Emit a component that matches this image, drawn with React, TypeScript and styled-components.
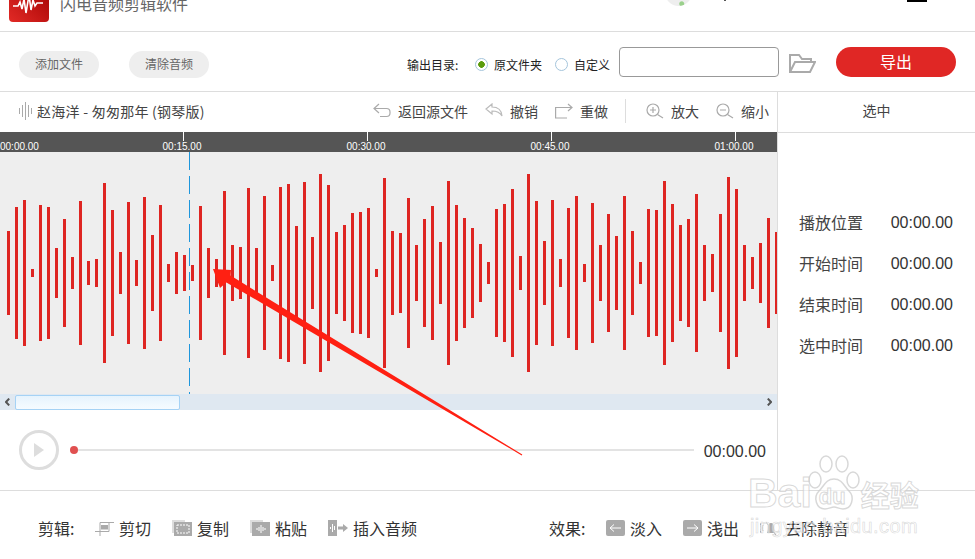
import React from 'react';
import styled, { createGlobalStyle } from 'styled-components';

const WAVE = [
  42, 66, 73, 4, 68, 66, 25, 54, 16, 72, 12, 14, 90, 63, 21, 71, 13, 76, 38, 68, 9, 21, 18, 8, 67,
  25, 14, 82, 28, 26, 85, 25, 77, 8, 86, 89, 47, 91, 36, 99, 88, 41, 48, 60, 61, 65, 4, 95, 42, 40,
  75, 28, 54, 67, 31, 92, 68, 55, 45, 29, 11, 64, 69, 84, 17, 99, 72, 32, 73, 14, 65, 77, 9, 70, 28,
  59, 37, 77, 42, 11, 64, 63, 92, 69, 48, 54, 79, 28, 19, 59, 96, 84, 28, 16, 30, 55, 41,
];

const MARKS = ['00:15.00', '00:30.00', '00:45.00', '01:00.00'];
const INFO = ['播放位置', '开始时间', '结束时间', '选中时间'];

const GlobalStyle = createGlobalStyle`
  html, body {
    margin: 0;
    padding: 0;
    background: #fff;
    overflow: hidden;
  }
  * {
    box-sizing: border-box;
  }
`;

const Page = styled.div`
  position: relative;
  width: 975px;
  height: 559px;
  overflow: hidden;
  background: #fff;
  color: #444;
  font-family: 'Noto Sans CJK SC', 'Liberation Sans', sans-serif;
`;

const Header = styled.header`
  display: flex;
  align-items: flex-start;
  height: 32px;
  padding-left: 9px;
  overflow: hidden;
  border-bottom: 1px solid #ddd;
`;

const Logo = styled.div`
  flex: none;
  width: 40px;
  height: 40px;
  margin-top: -18px;
  border-radius: 4px;
  background: linear-gradient(45deg, #e22a26, #a00000);
`;

const AppName = styled.div`
  margin: -7px 0 0 11px;
  width: 128px;
  font-size: 16px;
  line-height: 20px;
  white-space: nowrap;
  color: #666;
`;

const AvatarEdge = styled.div`
  flex: none;
  width: 27px;
  height: 27px;
  margin: -21px 0 0 477px;
  border-radius: 50%;
  background: radial-gradient(circle at 62% 92%, #9ad08c 0 2px, #eee 3px);
`;

const ArrowEdge = styled.div`
  flex: none;
  width: 2px;
  height: 1px;
  margin-left: 32px;
  background: #555;
`;

const WindowEdge = styled.div`
  flex: none;
  width: 20px;
  height: 2px;
  margin-left: 181px;
  background: #000;
`;

const Toolbar = styled.section`
  display: flex;
  align-items: center;
  height: 60px;
  padding: 0 19px;
  border-bottom: 1px solid #ddd;
`;

const PillButton = styled.button`
  width: 80px;
  height: 27px;
  margin: 6px 30px 0 0;
  padding: 0 0 2px;
  border: 0;
  border-radius: 14px;
  background: #eee;
  color: #666;
  font: 12px 'Noto Sans CJK SC', sans-serif;
`;

const OutputGroup = styled.div`
  display: flex;
  align-items: center;
  margin-left: auto;
`;

const OutputLabel = styled.span`
  width: 54px;
  margin: 6px 14px 0 0;
  font-size: 12px;
  color: #222;
  white-space: nowrap;
`;

const RadioItem = styled.label`
  display: flex;
  align-items: center;
  gap: 6px;
  margin: 6px 13px 0 0;
  font-size: 12px;
  color: #222;
  white-space: nowrap;
`;

const RadioMark = styled.i<{ $on?: boolean }>`
  display: block;
  width: 13px;
  height: 13px;
  border: 1px solid #a5c5dc;
  border-radius: 50%;
  background: ${(p) => (p.$on ? 'radial-gradient(circle, #5b9c0e 0 3px, #fff 3.6px)' : '#fff')};
`;

const PathInput = styled.div`
  width: 160px;
  height: 30px;
  margin-left: -4px;
  border: 1px solid #999;
  border-radius: 4px;
`;

const FolderIcon = styled.svg`
  margin: 3px 20px 0 10px;
`;

const ExportButton = styled.button`
  width: 120px;
  height: 30px;
  padding: 0 0 2px;
  border: 0;
  border-radius: 15px;
  background: #e02725;
  color: #fff;
  font: 16px 'Noto Sans CJK SC', sans-serif;
`;

const Main = styled.main`
  display: flex;
  height: 399px;
  border-bottom: 1px solid #ddd;
`;

const LeftColumn = styled.div`
  flex: none;
  width: 777px;
  overflow: hidden;
`;

const TitleRow = styled.div`
  display: flex;
  align-items: center;
  height: 40px;
  padding: 0 0 2px 19px;
  font-size: 14px;
`;

const TrackName = styled.span`
  margin-left: 5px;
  width: 168px;
  letter-spacing: 0.25px;
  white-space: nowrap;
`;

const ActionGroup = styled.div`
  display: flex;
  align-items: center;
  margin-left: auto;
  padding-right: 8px;
`;

const Action = styled.span<{ $gap?: number }>`
  display: flex;
  align-items: center;
  gap: 7px;
  margin-left: ${(p) => p.$gap ?? 17}px;
  white-space: nowrap;
`;

const Divider = styled.span`
  width: 1px;
  height: 24px;
  margin-left: 17px;
  background: #ddd;
`;

const Ruler = styled.div`
  display: flex;
  height: 20px;
  overflow: hidden;
  background: #555;
  font-family: 'Liberation Sans', sans-serif;
  font-size: 10px;
  color: #fff;
`;

const StartMark = styled.div`
  flex: none;
  width: 91px;
  padding-top: 9px;
  line-height: 12px;
`;

const Mark = styled.div`
  flex: none;
  position: relative;
  width: 184px;
  padding: 9px 2px 0 0;
  line-height: 12px;
  text-align: center;

  &::before {
    content: '';
    position: absolute;
    top: 0;
    left: 92px;
    width: 1px;
    height: 9px;
    background: #fff;
  }
`;

const Wave = styled.div`
  position: relative;
  height: 242px;
  background: #eee;
`;

const Cursor = styled.div`
  position: absolute;
  top: 0;
  bottom: 0;
  left: 189px;
  width: 1px;
  background: repeating-linear-gradient(to bottom, #1e96dc 0 18px, transparent 18px 24px);
`;

const ScrollTrack = styled.div`
  display: flex;
  align-items: center;
  height: 16px;
  background: #dfe8f1;
`;

const ScrollThumb = styled.div`
  width: 165px;
  height: 15px;
  margin: 0 auto 0 0;
  border: 1px solid #a5d2f5;
  border-radius: 2px;
  background: linear-gradient(to bottom, #e6f3fd, #f6fbff);
`;

const ScrollArrow = styled.svg`
  flex: none;
  margin: 0 5px;
`;

const Player = styled.div`
  display: flex;
  align-items: center;
  height: 80px;
  padding: 0 11px 0 19px;
`;

const PlayButton = styled.div`
  display: flex;
  flex: none;
  align-items: center;
  justify-content: center;
  width: 40px;
  height: 40px;
  margin-right: 11px;
  border: 3px solid #ddd;
  border-radius: 50%;
`;

const Track = styled.div`
  position: relative;
  flex: 1;
  height: 2px;
  margin-right: 10px;
  background: #e3e3e3;

  &::before {
    content: '';
    position: absolute;
    top: -3px;
    left: 0;
    width: 8px;
    height: 8px;
    border-radius: 50%;
    background: #e05050;
  }
`;

const TimeText = styled.span`
  margin-top: 4px;
  font: 16px 'Liberation Sans', sans-serif;
  color: #333;
`;

const SidePanel = styled.aside`
  flex: 1;
  border-left: 1px solid #ddd;
`;

const SideHead = styled.div`
  height: 41px;
  border-bottom: 1px solid #ddd;
  font-size: 14px;
  line-height: 37px;
  text-align: center;
`;

const InfoList = styled.div`
  padding: 68px 22px 0 21px;
`;

const InfoRow = styled.div`
  display: flex;
  align-items: center;
  justify-content: space-between;
  height: 41px;
  font-size: 16px;
`;

const InfoValue = styled.span`
  margin-top: 3px;
  font: 16px 'Liberation Sans', sans-serif;
  color: #333;
`;

const BottomBar = styled.footer`
  display: flex;
  align-items: center;
  height: 68px;
  padding: 6px 0 0 38px;
  font-size: 16px;
  color: #333;
`;

const ToolLabel = styled.span<{ $gap: number }>`
  width: 36px;
  margin-right: ${(p) => p.$gap}px;
  white-space: nowrap;
`;

const Tool = styled.span`
  display: flex;
  align-items: center;
  gap: 5px;
  margin-right: 21px;
  white-space: nowrap;
`;

const Section = styled.div`
  display: flex;
  align-items: center;
  margin-right: 111px;
`;

const Watermark = styled.div`
  position: absolute;
  top: 455px;
  left: 748px;
  width: 176px;
  height: 78px;
  pointer-events: none;
`;

const PawDrawing = styled.svg`
  position: absolute;
  top: 0;
  left: 59px;
`;

const BrandRow = styled.div`
  position: absolute;
  top: 15px;
  left: 0;
  display: flex;
  align-items: center;
  font: bold 41px 'Liberation Sans', sans-serif;
  color: rgba(255, 255, 255, 0.55);
  -webkit-text-stroke: 1px rgba(200, 200, 200, 0.7);
`;

const BrandPalm = styled.span`
  margin: 6px 5px 0 7px;
  width: 37px;
  font-size: 22px;
`;

const BrandCn = styled.span`
  font-size: 29px;
  font-family: 'Noto Sans CJK SC', sans-serif;
`;

const BrandUrl = styled.div`
  position: absolute;
  left: 2px;
  top: 60px;
  font: 20px 'Liberation Sans', sans-serif;
  letter-spacing: 0.4px;
  white-space: nowrap;
  color: rgba(255, 255, 255, 0.5);
  -webkit-text-stroke: 0.6px rgba(200, 200, 200, 0.7);
`;

const AnnotationArrow = styled.svg`
  position: absolute;
  top: 0;
  left: 0;
  pointer-events: none;
`;

const UndoIcon = () => (
  <svg width="18" height="16" viewBox="0 0 18 16" fill="none" stroke="#aaa" strokeWidth="1.2">
    <path d="M6 1 1 5.5 6 10M1 5.5h12.5a3.5 3.5 0 0 1 3.5 3.5v1a3.5 3.5 0 0 1-3.5 3.5H7" />
  </svg>
);

const BackIcon = () => (
  <svg width="18" height="16" viewBox="0 0 18 16" fill="none" stroke="#bbb" strokeWidth="1.2">
    <path d="M7 1 1 6l6 5V8c5 0 8 1.500 10 5-.5-6-4-9-10-9z" />
  </svg>
);

const RedoIcon = () => (
  <svg width="18" height="16" viewBox="0 0 18 16" fill="none" stroke="#aaa" strokeWidth="1.2">
    <path d="M13 1l4 3.500-4 3.500M17 4.500H.6V15H12" />
  </svg>
);

const ZoomIcon = ({ plus }: { plus?: boolean }) => (
  <svg width="18" height="16" viewBox="0 0 18 16" fill="none" stroke="#aaa" strokeWidth="1.2">
    <circle cx="7" cy="7" r="6" />
    <path d={plus ? 'M4 7h6M7 4v6M11.500 11.500 17 15' : 'M4 7h6M11.500 11.500 17 15'} />
  </svg>
);

const CutIcon = () => (
  <svg width="19" height="16" viewBox="0 0 19 16" fill="none" stroke="#aaa">
    <path d="M5 2.500h14M5 2.500V13M0 11.500h14V2.500M5 16v-3" />
    <rect x="6" y="5" width="7" height="4.500" fill="#aaa" stroke="none" />
  </svg>
);

const CopyIcon = () => (
  <svg width="20" height="16" viewBox="0 0 20 16">
    <rect x="0" y="0" width="13" height="13" fill="#ddd" />
    <rect x="2" y="2" width="18" height="14" fill="#aaa" />
    <rect x="5" y="5" width="12" height="8" fill="none" stroke="#fff" strokeDasharray="2 1" />
  </svg>
);

const PasteIcon = () => (
  <svg width="20" height="16" viewBox="0 0 20 16">
    <rect x="0" y="0" width="13" height="13" fill="#ddd" />
    <rect x="2" y="2" width="18" height="14" fill="#aaa" />
    <path d="M7 8v2M9 7v4M11 5v8M13 7v4M15 8v2" stroke="#fff" />
  </svg>
);

const InsertIcon = () => (
  <svg width="20" height="16" viewBox="0 0 20 16">
    <rect x="0" y="0" width="9" height="16" fill="#aaa" />
    <path d="M2.500 7v2M4.500 4v8M6.500 6v4" stroke="#fff" />
    <path d="M10 6.500h5V4l5 4-5 4V9.500h-5z" fill="#aaa" />
  </svg>
);

const FadeIcon = ({ right }: { right?: boolean }) => (
  <svg width="19" height="16" viewBox="0 0 19 16" fill="none">
    <rect width="19" height="16" rx="2" fill="#aaa" />
    <path d={right ? 'M4 8h11M11 4.500 15 8l-4 3.500' : 'M15 8H4M8 4.500 4 8l4 3.500'} stroke="#fff" />
  </svg>
);

const MuteIcon = () => (
  <svg width="20" height="16" viewBox="0 0 20 16" fill="none">
    <path d="M7 13c1-2 1-4 1-6 0-2 1-4 3-4s3 2 3 4c0 2 0 4 1 6z" fill="#aaa" />
    <path d="M3 5c-1 2-1 4 0 6M1 3c-1.500 3-1.500 7 0 10M6 2l10 13" stroke="#aaa" />
  </svg>
);

export default function App() {
  return (
    <Page>
      <GlobalStyle />
      <Header>
        <Logo>
          <svg width="40" height="32" viewBox="0 0 40 32" fill="none" stroke="#fff" strokeWidth="1.6">
            <path d="M4 24h5l2-4 2 7 2-10 2 14 3-18 2 15 2-10 2 6 2-3h6" />
          </svg>
        </Logo>
        <AppName>闪电音频剪辑软件</AppName>
        <AvatarEdge />
        <ArrowEdge />
        <WindowEdge />
      </Header>

      <Toolbar>
        <PillButton>添加文件</PillButton>
        <PillButton>清除音频</PillButton>
        <OutputGroup>
          <OutputLabel>输出目录:</OutputLabel>
          <RadioItem>
            <RadioMark $on />
            原文件夹
          </RadioItem>
          <RadioItem>
            <RadioMark />
            自定义
          </RadioItem>
          <PathInput />
          <FolderIcon width="27" height="19" viewBox="0 0 27 19" fill="none" stroke="#aaa" strokeWidth="2">
            <path d="M1 18V1h9l3 4h9v3M1 18h20l5-10H6z" />
          </FolderIcon>
          <ExportButton>导出</ExportButton>
        </OutputGroup>
      </Toolbar>

      <Main>
        <LeftColumn>
          <TitleRow>
            <svg width="13" height="18" viewBox="0 0 13 18" stroke="#aaa">
              <path d="M.5 6v6M3.500 3v12M6.500 0v18M9.500 3v12M12.500 6v6" />
            </svg>
            <TrackName>赵海洋 - 匆匆那年 (钢琴版)</TrackName>
            <ActionGroup>
              <Action>
                <UndoIcon />
                返回源文件
              </Action>
              <Action>
                <BackIcon />
                撤销
              </Action>
              <Action>
                <RedoIcon />
                重做
              </Action>
              <Divider />
              <Action $gap={20}>
                <ZoomIcon plus />
                放大
              </Action>
              <Action>
                <ZoomIcon />
                缩小
              </Action>
            </ActionGroup>
          </TitleRow>

          <Ruler>
            <StartMark>00:00.00</StartMark>
            {MARKS.map((m) => (
              <Mark key={m}>{m}</Mark>
            ))}
          </Ruler>

          <Wave>
            <svg width="777" height="242" viewBox="0 0 777 242">
              {WAVE.map((h, i) => (
                <rect key={i} x={7 + i * 8} y={121 - h} width="3" height={h * 2} fill="#de2522" />
              ))}
            </svg>
            <Cursor />
          </Wave>

          <ScrollTrack>
            <ScrollArrow width="5" height="8" viewBox="0 0 5 8" fill="none" stroke="#555" strokeWidth="2">
              <path d="M4.200.6 1 4l3.200 3.400" />
            </ScrollArrow>
            <ScrollThumb />
            <ScrollArrow width="5" height="8" viewBox="0 0 5 8" fill="none" stroke="#555" strokeWidth="2">
              <path d="M.8.6 4 4 .8 7.400" />
            </ScrollArrow>
          </ScrollTrack>

          <Player>
            <PlayButton>
              <svg width="12" height="16" viewBox="0 0 12 16">
                <path d="M1 1l10 7-10 7z" fill="#ddd" />
              </svg>
            </PlayButton>
            <Track />
            <TimeText>00:00.00</TimeText>
          </Player>
        </LeftColumn>

        <SidePanel>
          <SideHead>选中</SideHead>
          <InfoList>
            {INFO.map((label) => (
              <InfoRow key={label}>
                {label}
                <InfoValue>00:00.00</InfoValue>
              </InfoRow>
            ))}
          </InfoList>
        </SidePanel>
      </Main>

      <BottomBar>
        <Section>
          <ToolLabel $gap={21}>剪辑:</ToolLabel>
          <Tool>
            <CutIcon />
            剪切
          </Tool>
          <Tool>
            <CopyIcon />
            复制
          </Tool>
          <Tool>
            <PasteIcon />
            粘贴
          </Tool>
          <Tool>
            <InsertIcon />
            插入音频
          </Tool>
        </Section>
        <Section>
          <ToolLabel $gap={21}>效果:</ToolLabel>
          <Tool>
            <FadeIcon />
            淡入
          </Tool>
          <Tool>
            <FadeIcon right />
            浅出
          </Tool>
          <Tool>
            <MuteIcon />
            去除静音
          </Tool>
        </Section>
      </BottomBar>

      <Watermark>
        <PawDrawing width="54" height="58" viewBox="0 0 54 58" fill="rgba(255,255,255,.5)" stroke="rgba(200,200,200,.7)" strokeWidth="1.5">
          <ellipse cx="8" cy="25" rx="6" ry="8" />
          <ellipse cx="19" cy="9" rx="6" ry="8" />
          <ellipse cx="35" cy="9" rx="6" ry="8" />
          <ellipse cx="46" cy="25" rx="6" ry="8" />
          <path d="M27 24c8 0 10 7 15 12 6 6 3 18-6 18-4 0-6-2-9-2s-5 2-9 2c-9 0-12-12-6-18 5-5 7-12 15-12z" />
        </PawDrawing>
        <BrandRow>
          Bai
          <BrandPalm>du</BrandPalm>
          <BrandCn>经验</BrandCn>
        </BrandRow>
        <BrandUrl>jingyan.baidu.com</BrandUrl>
      </Watermark>

      <AnnotationArrow width="975" height="559" viewBox="0 0 975 559">
        <path d="M213 269 231 270 230.600 275.600 522.300 454.600 521.700 455.400 226.400 282.400 220 288z" fill="#ff2012" />
      </AnnotationArrow>
    </Page>
  );
}
